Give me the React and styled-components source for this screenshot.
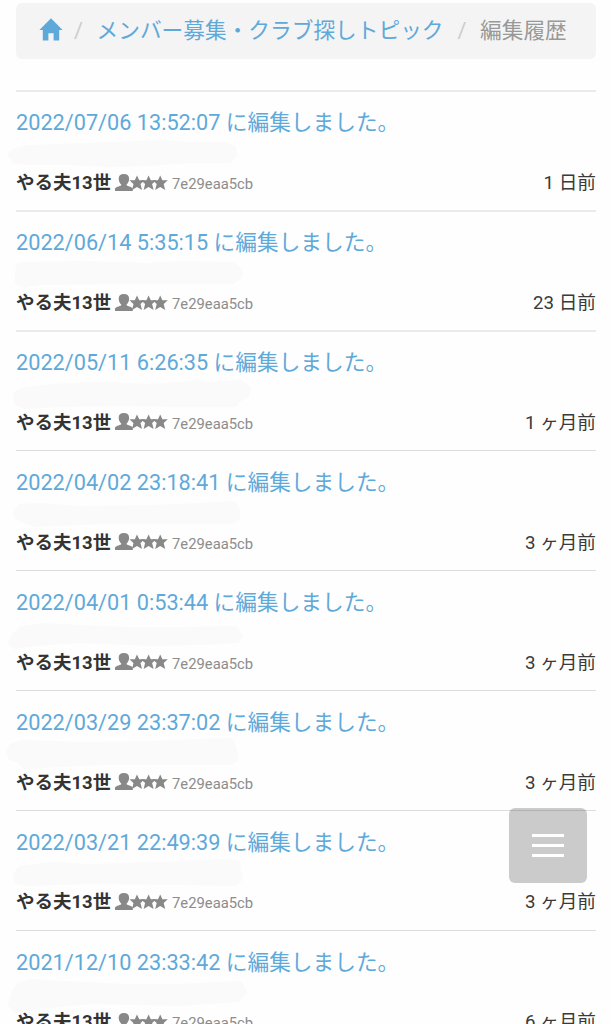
import React from 'react'
import styled, { createGlobalStyle } from 'styled-components';

const histories = [
    { date: '2022/07/06 13:52:07', ago: '1 日前', mask: '11,17 15,13 30,10 60,9 110,7 160,5 190,7 225,7 233,10 234,17 230,22 190,22 150,25 110,26 70,24 30,24 15,23' },
    { date: '2022/06/14 5:35:15', ago: '23 日前', mask: '19,8 25,7 80,6 150,8 180,6 233,7 240,13 239,19 232,23 180,23 120,23 40,24 25,27 18,24 18,16' },
    { date: '2022/05/11 6:26:35', ago: '1 ヶ月前', mask: '16,16 22,13 50,9 100,7 150,9 190,6 198,5 208,7 240,5 248,10 246,18 238,21 234,26 180,26 120,25 60,26 25,28 17,25' },
    { date: '2022/04/02 23:18:41', ago: '3 ヶ月前', mask: '16,14 20,9 40,8 80,11 150,10 200,8 233,6 237,12 237,19 232,23 180,23 100,23 35,26 24,22 17,18' },
    { date: '2022/04/01 0:53:44', ago: '3 ヶ月前', mask: '11,24 15,17 22,11 45,8 80,10 130,12 180,12 234,11 240,17 237,22 200,24 150,25 80,22 35,25 15,28' },
    { date: '2022/03/29 23:37:02', ago: '3 ヶ月前', mask: '9,14 12,8 22,5 80,7 150,6 200,4 231,3 233,9 236,19 231,24 180,24 100,24 25,28 19,22 11,19' },
    { date: '2022/03/21 22:49:39', ago: '3 ヶ月前', mask: '16,18 20,11 50,7 90,9 160,7 220,4 237,5 238,14 240,20 235,25 180,24 90,23 30,25 17,23' },
    { date: '2021/12/10 23:33:42', ago: '6 ヶ月前', mask: '11,26 15,13 20,7 30,4 60,6 130,9 180,9 240,6 244,14 238,21 180,25 90,23 40,28 16,32' },
];

function HomeIcon() {
    return (
        <HomeSvg viewBox="0 0 24 23">
            <path d="M12 0.3 L23.6 12 H20.2 V22.4 H14.6 V15.2 H9.4 V22.4 H3.8 V12 H0.4 Z" />
        </HomeSvg>
    )
}

function UserIcon() {
    return (
        <UserSvg viewBox="0 0 53 17">
            <path d="M8.9 0 C12.4 0 14.2 1.8 14.1 5 C14 7.6 12.9 9.2 11.6 10.4 V11.2 C13 12.4 17.8 12.8 17.8 15 V17 H0 V15 C0 12.8 4.8 12.4 6.2 11.2 V10.4 C4.9 9.2 3.8 7.6 3.7 5 C3.6 1.8 5.4 0 8.9 0 Z" />
            {[22, 33.6, 45.2].map((x) => (
                <path key={x} transform={`translate(${x} 9)`} d="M0 -7.6 L2.2 -2.7 H7.6 L3.5 1.1 L5 7 L0 3.9 L-5 7 L-3.5 1.1 L-7.6 -2.7 H-2.2 Z" />
            ))}
        </UserSvg>
    )
}

function App() {
    return (
        <>
            <GlobalStyle />
            <Layout>
                <Breadcrumb>
                    <HomeIcon />
                    <Slash>/</Slash>
                    <BreadLink href="#">メンバー募集・クラブ探しトピック</BreadLink>
                    <Slash>/</Slash>
                    <Current>編集履歴</Current>
                </Breadcrumb>
                <List>
                    {histories.map((item, index) => (
                        <Item key={item.date} $thick={index < 3}>
                            <ItemTitle href="#">{item.date} に編集しました。</ItemTitle>
                            <Mask viewBox="0 0 260 36">
                                <polygon points={item.mask} />
                            </Mask>
                            <Meta>
                                <Name>やる夫13世</Name>
                                <UserIcon />
                                <UserId>7e29eaa5cb</UserId>
                                <Ago>{item.ago}</Ago>
                            </Meta>
                        </Item>
                    ))}
                </List>
            </Layout>
            <MenuButton aria-label="menu">
                <Bar />
                <Bar />
                <Bar />
            </MenuButton>
        </>
    )
}

export default App

const GlobalStyle = createGlobalStyle`
  * {
    box-sizing: border-box;
  }
  body {
    margin: 0;
    height: 1024px;
    overflow: hidden;
    background-color: #fefefe;
    color: #3a3a3a;
    font-family: Roboto, "Noto Sans CJK JP", sans-serif;
  }
  a {
    color: #5fa9da;
    text-decoration: none;
  }
`
const Layout = styled.div`
  height: 1024px;
  overflow: hidden;
  padding: 3px 15px 0 16px;
`
const Breadcrumb = styled.div`
  display: flex;
  align-items: center;
  height: 56px;
  padding-left: 23px;
  border-radius: 6px;
  background-color: #f4f4f4;
  font-size: 21.7px;
  line-height: 32px;
  white-space: nowrap;
`
const HomeSvg = styled.svg`
  width: 24px;
  height: 23px;
  margin-top: -3px;
  fill: #5fa9da;
`
const Slash = styled.span`
  width: 33.5px;
  padding-left: 11px;
  color: #ccc;
`
const BreadLink = styled.a`
  width: 350px;
`
const Current = styled.span`
  color: #999;
`
const List = styled.div`
  padding-top: 31.45px;
`
const Item = styled.div`
  display: flex;
  flex-direction: column;
  height: 119.88px;
  border-top: ${(props) => (props.$thick ? '2px solid #eaeaea' : '1px solid #dcdcdc')};
  padding-top: ${(props) => (props.$thick ? '16px' : '17px')};
`
const ItemTitle = styled.a`
  height: 30px;
  line-height: 30px;
  font-size: 21.7px;
  white-space: nowrap;
`
const Mask = styled.svg`
  flex: none;
  width: 260px;
  height: 36px;
  margin: 0 0 -5.3px -16px;
  fill: #fafafa;
  stroke: #fafafa;
  stroke-width: 6;
  stroke-linejoin: round;
`
const Meta = styled.div`
  display: flex;
  align-items: center;
  height: 28px;
  line-height: 28px;
  font-size: 18.66px;
  white-space: nowrap;
`
const Name = styled.span`
  width: 99px;
  color: #333;
  font-weight: bold;
  font-size: 18.5px;
`
const UserSvg = styled.svg`
  width: 53px;
  height: 17px;
  margin-top: -2px;
  fill: #888;
`
const UserId = styled.span`
  margin-left: 4px;
  padding-top: 2px;
  color: #8c8c8c;
  font-size: 14.8px;
`
const Ago = styled.span`
  margin-left: auto;
`
const MenuButton = styled.button`
  position: fixed;
  top: 808px;
  left: 509px;
  display: flex;
  flex-direction: column;
  align-items: center;
  justify-content: center;
  gap: 7px;
  width: 78px;
  height: 75px;
  padding: 0;
  border: none;
  border-radius: 6px;
  background-color: rgba(0, 0, 0, 0.2);
`
const Bar = styled.span`
  width: 32px;
  height: 3px;
  background-color: #fff;
`
